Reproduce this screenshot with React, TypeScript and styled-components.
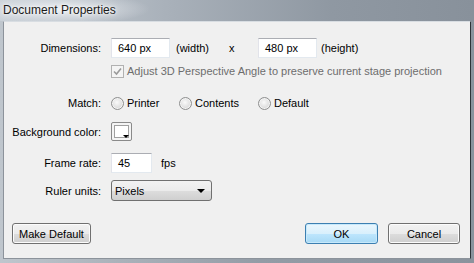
import React from "react";
import styled, { createGlobalStyle } from "styled-components";

const Global = createGlobalStyle`
  html, body { margin: 0; padding: 0; }
  body {
    width: 474px; height: 263px; overflow: hidden;
    font-family: "Liberation Sans", Arial, sans-serif;
    font-size: 11px;
    background: #8d969f;
  }
`;

const Window = styled.div`
  width: 474px;
  height: 263px;
  display: flex;
  flex-direction: column;
  background: linear-gradient(to right, #bfc6cd 0%, #aab2ba 25%, #939ca6 55%, #8a939d 100%);
`;

const TitleBar = styled.div`
  height: 21px;
  flex: none;
  display: flex;
  align-items: center;
  padding-left: 3px;
  background:
    radial-gradient(ellipse 90px 16px at 60px 9px, rgba(235,238,242,0.95), rgba(235,238,242,0) 100%),
    linear-gradient(to right, #c9d0d7 0%, #a9b1ba 35%, #8f98a2 70%, #88919b 100%);
`;

const Title = styled.span`
  font-size: 12px;
  color: #1b1b1b;
  text-shadow: 0 0 6px #fff, 0 0 3px #fff;
  margin-top: -2px;
`;

const Client = styled.div`
  flex: 1;
  margin: 0 3px 4px 3px;
  background: #f0f0f0;
  border: 1px solid #8c939b;
  border-top-color: #d8dde2;
  border-right-color: #2e3338;
  display: flex;
  flex-direction: column;
`;

const Row = styled.div<{ $top: number; $h: number }>`
  display: grid;
  grid-template-columns: 97px 1fr;
  column-gap: 10px;
  align-items: center;
  margin-top: ${(p) => p.$top}px;
  height: ${(p) => p.$h}px;
`;

const Label = styled.span`
  text-align: right;
  color: #000;
  white-space: nowrap;
`;

const Controls = styled.div`
  display: flex;
  align-items: center;
  height: 100%;
`;

const TextBox = styled.div<{ $w: number }>`
  box-sizing: border-box;
  width: ${(p) => p.$w}px;
  height: 20px;
  background: #fff;
  border: 1px solid #e3e9ef;
  border-top-color: #abadb3;
  border-left-color: #e2e3ea;
  display: flex;
  align-items: center;
  padding-left: 6px;
  color: #000;
`;

const Unit = styled.span<{ $ml: number; $w?: number }>`
  margin-left: ${(p) => p.$ml}px;
  width: ${(p) => (p.$w ? `${p.$w}px` : "auto")};
  color: #000;
  white-space: nowrap;
`;

const Check = styled.span`
  box-sizing: border-box;
  width: 13px;
  height: 13px;
  border: 1px solid #b1b1b1;
  background: #f4f4f4;
  display: flex;
  align-items: center;
  justify-content: center;
`;

const Disabled = styled.span`
  color: #6d6d6d;
  margin-left: 3px;
  white-space: nowrap;
`;

const RadioItem = styled.label<{ $w?: number }>`
  display: flex;
  align-items: center;
  width: ${(p) => (p.$w ? `${p.$w}px` : "auto")};
  color: #000;
`;

const RadioDot = styled.span`
  box-sizing: border-box;
  width: 13px;
  height: 13px;
  border-radius: 50%;
  border: 1px solid #8e8f8f;
  background: radial-gradient(circle at 45% 40%, #fafafa 0%, #e5e5e5 45%, #c9c9c9 100%);
  box-shadow: inset 0 0 0 1px #f4f4f4;
  margin-right: 3px;
  flex: none;
`;

const Swatch = styled.div`
  box-sizing: border-box;
  position: relative;
  width: 21px;
  height: 19px;
  border: 1px solid #8a8a8a;
  border-radius: 2px;
  background: #f4f4f4;
  padding: 2px;
`;

const SwatchInner = styled.div`
  box-sizing: border-box;
  width: 100%;
  height: 100%;
  background: #fff;
  border: 1px solid #a0a0a0;
`;

const SwatchArrow = styled.span`
  position: absolute;
  right: 2px;
  bottom: 2px;
  width: 0;
  height: 0;
  border-left: 3px solid transparent;
  border-right: 3px solid transparent;
  border-top: 3px solid #000;
`;

const Select = styled.div`
  box-sizing: border-box;
  width: 101px;
  height: 21px;
  border: 1px solid #707070;
  border-radius: 3px;
  background: linear-gradient(#f2f2f2 0%, #ebebeb 50%, #dddddd 51%, #cfcfcf 100%);
  display: flex;
  align-items: center;
  justify-content: space-between;
  padding: 0 6px 0 3px;
  color: #000;
`;

const Arrow = styled.span`
  width: 0;
  height: 0;
  border-left: 4px solid transparent;
  border-right: 4px solid transparent;
  border-top: 4px solid #000;
`;

const Footer = styled.div`
  margin-top: auto;
  margin-bottom: 14px;
  display: flex;
  align-items: center;
  padding: 0 10px 0 8px;
`;

const Button = styled.button<{ $w: number; $primary?: boolean }>`
  box-sizing: border-box;
  width: ${(p) => p.$w}px;
  height: 21px;
  margin: 0;
  padding: 0;
  font-family: inherit;
  font-size: 11px;
  color: #000;
  border-radius: 3px;
  border: 1px solid ${(p) => (p.$primary ? "#3c7fb1" : "#707070")};
  background: ${(p) =>
    p.$primary
      ? "linear-gradient(#eaf6fd 0%, #d9f0fc 50%, #bee6fd 51%, #a7d9f5 100%)"
      : "linear-gradient(#f2f2f2 0%, #ebebeb 50%, #dddddd 51%, #cfcfcf 100%)"};
  box-shadow: inset 0 0 0 1px ${(p) => (p.$primary ? "#c7e9fb" : "#fcfcfc")};
`;

const Spacer = styled.div`
  flex: 1;
`;

const Gap = styled.div<{ $w: number }>`
  width: ${(p) => p.$w}px;
`;

export default function App() {
  return (
    <>
      <Global />
      <Window>
        <TitleBar>
          <Title>Document Properties</Title>
        </TitleBar>
        <Client>
          <Row $top={16} $h={20}>
            <Label>Dimensions:</Label>
            <Controls>
              <TextBox $w={59}>640 px</TextBox>
              <Unit $ml={6} $w={53}>(width)</Unit>
              <Unit $ml={0} $w={29}>x</Unit>
              <TextBox $w={59}>480 px</TextBox>
              <Unit $ml={4}>(height)</Unit>
            </Controls>
          </Row>
          <Row $top={6} $h={14}>
            <span />
            <Controls>
              <Check>
                <svg width="9" height="9" viewBox="0 0 9 9">
                  <path d="M1 4.5 L3.5 7 L8 1.5" fill="none" stroke="#9a9a9a" strokeWidth="1.6" />
                </svg>
              </Check>
              <Disabled>Adjust 3D Perspective Angle to preserve current stage projection</Disabled>
            </Controls>
          </Row>
          <Row $top={17} $h={16}>
            <Label>Match:</Label>
            <Controls>
              <RadioItem $w={68}>
                <RadioDot />
                Printer
              </RadioItem>
              <RadioItem $w={79}>
                <RadioDot />
                Contents
              </RadioItem>
              <RadioItem>
                <RadioDot />
                Default
              </RadioItem>
            </Controls>
          </Row>
          <Row $top={11} $h={19}>
            <Label>Background color:</Label>
            <Controls>
              <Swatch>
                <SwatchInner />
                <SwatchArrow />
              </Swatch>
            </Controls>
          </Row>
          <Row $top={12} $h={20}>
            <Label>Frame rate:</Label>
            <Controls>
              <TextBox $w={41}>45</TextBox>
              <Unit $ml={9}>fps</Unit>
            </Controls>
          </Row>
          <Row $top={7} $h={21}>
            <Label>Ruler units:</Label>
            <Controls>
              <Select>
                Pixels
                <Arrow />
              </Select>
            </Controls>
          </Row>
          <Footer>
            <Button $w={79}>Make Default</Button>
            <Spacer />
            <Button $w={73} $primary>OK</Button>
            <Gap $w={10} />
            <Button $w={72}>Cancel</Button>
          </Footer>
        </Client>
      </Window>
    </>
  );
}
